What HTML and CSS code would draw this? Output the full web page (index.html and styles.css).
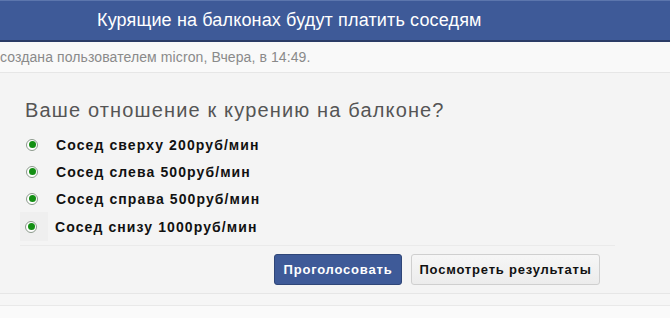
FILE: index.html
```html
<!DOCTYPE html>
<html lang="ru">
<head>
    <meta charset="UTF-8">
    <meta name="viewport" content="width=device-width, initial-scale=1.0">
    <title>Курящие на балконах будут платить соседям</title>
    <link rel="stylesheet" href="styles.css">
</head>
<body>
    <div class="topic-header">
        <h1>Курящие на балконах будут платить соседям</h1>
    </div>

    <div class="topic-meta">создана пользователем micron, Вчера, в 14:49.</div>

    <div class="poll">
        <h2 class="poll-question">Ваше отношение к курению на балконе?</h2>

        <ul class="poll-options">
            <li class="poll-option"><span class="radio"></span>Сосед сверху 200руб/мин</li>
            <li class="poll-option"><span class="radio"></span>Сосед слева 500руб/мин</li>
            <li class="poll-option"><span class="radio"></span>Сосед справа 500руб/мин</li>
            <li class="poll-option hover"><span class="radio"></span>Сосед снизу 1000руб/мин</li>
        </ul>

        <div class="poll-actions">
            <button class="btn btn-primary">Проголосовать</button>
            <button class="btn btn-default">Посмотреть результаты</button>
        </div>
    </div>

    <div class="poll-footer"></div>
</body>
</html>
```

FILE: styles.css
```css
body {
    margin: 0;
    padding: 0;
    font-family: "Liberation Sans", Arial, sans-serif;
    background-color: #fafafa;
    overflow: hidden;
}

.topic-header {
    height: 39px;
    background-color: #3e5a98;
    border-top: 1px solid #5c76ad;
    border-bottom: 2px solid #2b3c66;
}

.topic-header h1 {
    margin: 0;
    padding-left: 97px;
    font-size: 18px;
    font-weight: normal;
    line-height: 39px;
    letter-spacing: 0.15px;
    color: #fff;
}

.topic-meta {
    height: 30px;
    line-height: 30px;
    padding-left: 0;
    background-color: #f9f9f9;
    border-bottom: 1px solid #e6e6e6;
    font-size: 14px;
    letter-spacing: 0.1px;
    color: #8a8a8a;
}

.poll {
    background-color: #f4f4f4;
    padding: 26px 0 8px 0;
    border-bottom: 1px solid #e6e6e6;
}

.poll-question {
    margin: 0 0 10px 25px;
    font-size: 20px;
    font-weight: normal;
    line-height: 22px;
    letter-spacing: 1.15px;
    color: #555;
}

.poll-options {
    list-style: none;
    margin: 0 55px 0 20px;
    padding: 0 0 4px 0;
    border-bottom: 1px solid #eaeaea;
}

.poll-option {
    display: flex;
    align-items: center;
    height: 27px;
    padding-left: 6px;
    font-size: 14px;
    font-weight: bold;
    letter-spacing: 1.1px;
    color: #111;
}

.poll-option.hover {
    height: 29px;
    padding-left: 5px;
    background: linear-gradient(to right, #efefef 0, #efefef 28px, transparent 28px);
}

.radio {
    width: 10px;
    height: 10px;
    margin-right: 18px;
    border: 1px solid #8c9a8c;
    border-radius: 50%;
    background-color: #fff;
    display: flex;
    align-items: center;
    justify-content: center;
    flex-shrink: 0;
}

.radio::after {
    content: "";
    width: 7px;
    height: 7px;
    border-radius: 50%;
    background-color: #138f13;
}

.poll-actions {
    display: flex;
    justify-content: flex-end;
    gap: 9px;
    padding: 8px 70px 0 0;
}

.btn {
    height: 31px;
    padding: 0;
    font-family: "Liberation Sans", Arial, sans-serif;
    font-size: 13px;
    font-weight: bold;
    letter-spacing: 0.8px;
    border-radius: 3px;
    cursor: pointer;
}

.btn-primary {
    width: 128px;
    background-color: #3e5a98;
    border: 1px solid #2f4678;
    color: #fff;
}

.btn-default {
    width: 189px;
    background: linear-gradient(#f6f6f6, #ececec);
    border: 1px solid #cfcfcf;
    color: #111;
}

.poll-footer {
    height: 11px;
    background-color: #f6f6f6;
    border-bottom: 1px solid #e9e9e9;
}
```
